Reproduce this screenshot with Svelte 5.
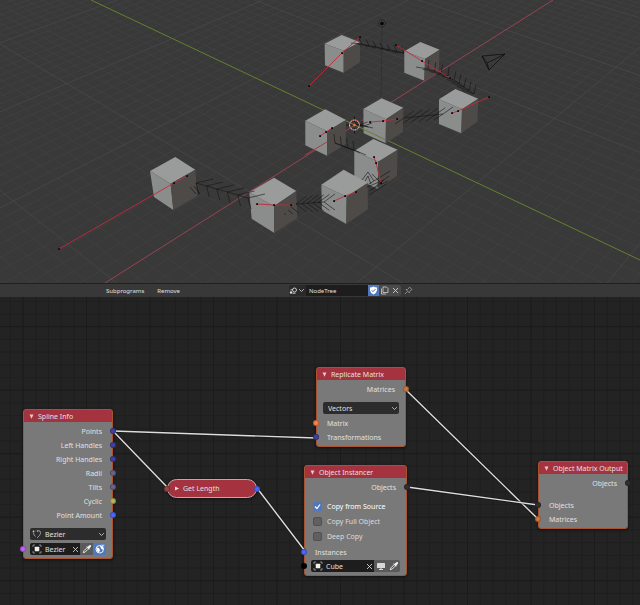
<script>
  let treeName = $state('NodeTree');
  let splineType = $state('Bezier');
  let splineObject = $state('Bezier');
  let matrixMode = $state('Vectors');
  let sourceObject = $state('Cube');

  let options = $state([
    { id: 'copy-source', label: 'Copy from Source', checked: true },
    { id: 'copy-full', label: 'Copy Full Object', checked: false },
    { id: 'deep-copy', label: 'Deep Copy', checked: false }
  ]);

  const splineOutputs = [
    { label: 'Points', type: 'vectors' },
    { label: 'Left Handles', type: 'vectors' },
    { label: 'Right Handles', type: 'vectors' },
    { label: 'Radii', type: 'floats' },
    { label: 'Tilts', type: 'floats' },
    { label: 'Cyclic', type: 'boolean' },
    { label: 'Point Amount', type: 'integer' }
  ];

  const wires = [
    [113, 134, 316, 141],
    [113, 134, 168, 191],
    [257, 191, 305, 254],
    [405, 92, 538, 222],
    [407, 190, 538, 208]
  ];

  // Floor grid: both line families run to a vanishing point
  const origin = [354.8, 125.2];
  const vpX = [1151, -378];
  const vpY = [-731, -390];

  const project = (u, v) => {
    const a = u * 0.0117;
    const b = v * -0.0101;
    const w = 1 + a + b;
    return [
      (origin[0] + a * vpX[0] + b * vpY[0]) / w,
      (origin[1] + a * vpX[1] + b * vpY[1]) / w
    ];
  };

  const floor = [];
  for (let i = -45; i <= 60; i++) {
    if (i === 0) continue;
    const major = i % 10 === 0;
    if (i <= 45) floor.push({ from: project(-38, i), to: project(70, i), major });
    floor.push({ from: project(i, -80), to: project(i, 28), major });
  }
  const lines = floor.filter((l) => [...l.from, ...l.to].every((n) => Math.abs(n) < 9000));

  // left, top, right, front, bottom right, bottom front, bottom left
  const cubes = [
    { at: [290, 0], p: [[104, 131], [155, 105], [210, 127], [161, 152], [210, 187], [161, 218], [105, 196]] },
    { at: [290, 0], p: [[343, 154], [391, 126], [449, 149], [405, 177], [446, 214], [403, 242], [343, 218]] },
    { at: [290, 0], p: [[447, 298], [496, 267], [565, 296], [516, 328], [562, 365], [514, 400], [447, 372]] },
    { at: [290, 90], p: [[220, 57], [275, 25], [340, 53], [288, 88], [339, 125], [287, 160], [221, 130]] },
    { at: [290, 90], p: [[46, 92], [106, 58], [168, 90], [112, 124], [167, 162], [111, 197], [46, 166]] },
    { at: [290, 90], p: [[193, 183], [250, 147], [323, 179], [265, 215], [321, 258], [263, 297], [193, 262]] },
    { at: [290, 90], p: [[94, 284], [161, 239], [233, 279], [170, 320], [234, 358], [169, 402], [96, 361]] },
    { at: [140, 140], p: [[328, 157], [402, 113], [469, 153], [402, 199], [472, 234], [403, 279], [335, 236]] },
    { at: [140, 140], p: [[30, 93], [106, 51], [166, 89], [92, 131], [172, 168], [100, 210], [42, 171]] }
  ];

  const face = (cube, ids) =>
    ids.map((i) => `${cube.at[0] + cube.p[i][0] / 3},${cube.at[1] + cube.p[i][1] / 3}`).join(' ');

  const handles = [
    [[309, 86], [342, 53], [360, 37]],
    [[396, 45], [422, 61], [450, 78]],
    [[452, 113], [458, 111], [489, 97]],
    [[370, 122], [383, 121], [397, 119]],
    [[320, 136], [326, 132], [332, 128]],
    [[374, 157], [376, 163], [381, 183]],
    [[334, 201], [345, 196], [356, 192]],
    [[257, 204], [274, 205], [291, 205]],
    [[59, 249], [174, 183], [187, 176]]
  ];

  // Curve normals: spine points with two barbs on each
  const chains = [
    { from: [196, 183], to: [248, 198], n: 5, up: [17, -4], down: [3, 11] },
    { from: [296, 204], to: [324, 202], n: 5, up: [11, -8], down: [11, 8] },
    { from: [335, 143], to: [354, 150], n: 3, up: [-1, -9], down: [12, 5] },
    { from: [355, 124], to: [364, 126], n: 2, up: [8, -3], down: [9, 2] },
    { from: [404, 118], to: [443, 114], n: 5, up: [10, -7], down: [-9, 6] },
    { from: [362, 44], to: [404, 53], n: 6, up: [-3, -6], down: [-11, -1] },
    { from: [428, 69], to: [448, 76], n: 3, up: [1, -9], down: [-12, -2] },
    { from: [454, 80], to: [474, 94], n: 4, up: [2, -9], down: [-12, -4] }
  ];

  const barbs = (c) => {
    let d = `M${c.from} L${c.to}`;
    for (let i = 0; i <= c.n; i++) {
      const x = c.from[0] + ((c.to[0] - c.from[0]) * i) / c.n;
      const y = c.from[1] + ((c.to[1] - c.from[1]) * i) / c.n;
      d += ` M${x + c.up[0]},${y + c.up[1]} L${x},${y} l${c.down[0]},${c.down[1]}`;
    }
    return d;
  };

  const gridStep = 12.7;
  const steps = Array.from({ length: 160 }, (_, i) => i);
</script>

{#snippet chevron()}
  <svg class="chevron" width="7" height="5" viewBox="0 0 7 5" aria-hidden="true">
    <path d="M1.200 1.200L3.500 3.500L5.800 1.200" fill="none" stroke="#c8c8c8" stroke-width="0.9" />
  </svg>
{/snippet}

{#snippet cubeIcon()}
  <svg width="10" height="10" viewBox="0 0 20 20" aria-hidden="true">
    <rect x="5.500" y="5.500" width="9" height="9" rx="1" fill="#f0f0f0" />
    <path d="M2 6V2H6M14 2H18V6M18 14V18H14M6 18H2V14" fill="none" stroke="#a8a8a8" stroke-width="1.500" />
  </svg>
{/snippet}

{#snippet cross()}
  <svg width="7" height="7" viewBox="0 0 7 7" aria-hidden="true">
    <path d="M1 1L6 6M6 1L1 6" fill="none" stroke="#d0d0d0" stroke-width="0.9" />
  </svg>
{/snippet}

{#snippet dropper()}
  <svg width="10" height="10" viewBox="0 0 20 20" aria-hidden="true">
    <path d="M11 6L14 3Q16.500 1 18 2.500Q19 4.500 17 6.500L14.500 9L15.500 10L14 11.500L8.500 6L10 4.500Z" fill="#f0f0f0" />
    <path d="M9.500 8L4 13.500L2.500 17.500L6.500 16L12 10.500" fill="none" stroke="#f0f0f0" stroke-width="1.800" />
  </svg>
{/snippet}

{#snippet title(text)}
  <header class="node-title">
    <svg width="5" height="5" viewBox="0 0 5 5" aria-hidden="true">
      <path d="M0.500 0.500H4.500L2.500 4.800Z" fill="#e6c9cc" />
    </svg>
    <h2>{text}</h2>
  </header>
{/snippet}

<main class="editor">
  <section class="viewport" aria-label="3D viewport">
    <svg class="scene" viewBox="0 0 640 283" preserveAspectRatio="xMidYMid slice">
      {#each lines as l}
        <line class="floor" class:major={l.major} x1={l.from[0]} y1={l.from[1]} x2={l.to[0]} y2={l.to[1]} />
      {/each}
      <path class="axis-y" d="M91 0L640 260" />
      <path class="axis-x" d="M105 283L553 0" />
      <path class="lamp-line" d="M382 27L381 98" />

      <!-- Cubes, far to near -->
      {#each cubes as cube}
        <polygon class="cube-top" points={face(cube, [0, 1, 2, 3])} />
        <polygon class="cube-left" points={face(cube, [0, 3, 5, 6])} />
        <polygon class="cube-right" points={face(cube, [3, 2, 4, 5])} />
      {/each}
      <path class="axis-y" d="M363 129L386 140" />
      <path class="axis-x" d="M305 155L327 142" />

      {#each chains as chain}
        <path class="barbs" d={barbs(chain)} />
      {/each}
      <!-- Tight bend in front of the middle cube, and ends that overlap cube faces -->
      <path
        class="barbs"
        d="M369 191L378 186L388 181M362 180L368 172L374 181M365 181L368 176L371 184M369 184L390 171M371 190L389 176M369 195L386 184M372 174L380 182M367 187L384 180M284 213L286 215M288 210L293 214M291 207L299 213M190 187L196 194M194 186L200 194"
      />

      {#each handles as h}
        <polyline class="handle" points={h.join(' ')} />
        {#each h as p}
          <rect x={p[0] - 0.8} y={p[1] - 0.8} width="1.800" height="1.800" fill="#0c0c0c" />
        {/each}
      {/each}

      <!-- Lamp and camera -->
      <circle cx="382" cy="23.500" r="1.800" fill="#050505" />
      <circle cx="382" cy="23.500" r="3.500" fill="none" stroke="#111" stroke-width="0.7" stroke-dasharray="1.500 1" />
      <path d="M482 56L505 54L489 70ZM482 56L487 63L505 54M487 63L489 70" fill="none" stroke="#0a0a0a" stroke-width="0.7" />

      <!-- 3D cursor -->
      <path d="M354.500 116.500V122M354.500 128V133.500M346 125H351.500M357.500 125H363" stroke="#111" stroke-width="0.8" />
      <circle cx="354.500" cy="125" r="5" fill="none" stroke="#d8d0d0" stroke-width="1" />
      <circle cx="354.500" cy="125" r="5" fill="none" stroke="#c8323c" stroke-width="1" stroke-dasharray="2 2" />
      <circle cx="354.500" cy="125" r="1.200" fill="#f08a1c" />
    </svg>
  </section>

  <nav class="toolbar" aria-label="Node editor">
    <button class="menu">Subprograms</button>
    <button class="menu">Remove</button>
    <div class="tree-picker">
      <button class="browse" aria-label="Browse node trees">
        <svg width="9" height="8" viewBox="0 0 18 16" aria-hidden="true">
          <circle cx="11" cy="6" r="4" fill="none" stroke="#d8d8d8" stroke-width="1.800" />
          <circle cx="4" cy="11" r="2.500" fill="#d8d8d8" />
          <path d="M7 12.500H13M3 6L7 5" stroke="#d8d8d8" stroke-width="1.800" />
        </svg>
        {@render chevron()}
      </button>
      <input class="tree-name" aria-label="Node tree name" bind:value={treeName} />
      <button class="tool active" aria-label="Fake user">
        <svg width="9" height="9" viewBox="0 0 18 18" aria-hidden="true">
          <path d="M9 1Q12 3 16 3V9Q15 14 9 17Q3 14 2 9V3Q6 3 9 1Z" fill="#fff" />
          <path d="M5.500 8.500L8 11.500L13 6" fill="none" stroke="#4f78bf" stroke-width="2" />
        </svg>
      </button>
      <button class="tool" aria-label="Duplicate">
        <svg width="9" height="9" viewBox="0 0 18 18" aria-hidden="true">
          <path d="M6 2H13L16 5V13H6ZM3 5V16H12" fill="none" stroke="#d0d0d0" stroke-width="1.600" />
        </svg>
      </button>
      <button class="tool" aria-label="Unlink">{@render cross()}</button>
    </div>
    <button class="pin" aria-label="Pin">
      <svg width="9" height="9" viewBox="0 0 18 18" aria-hidden="true">
        <path d="M11 2L16 7L14 8L11 11V14L4 7H7L10 4ZM7 11L2 16" fill="none" stroke="#999" stroke-width="1.600" />
      </svg>
    </button>
  </nav>

  <section class="canvas" aria-label="Node canvas">
    <svg class="backdrop" aria-hidden="true">
      {#each steps as i}
        <line class="grid" class:major={i % 5 === 2} x1={10.3 + (i - 1) * gridStep} x2={10.3 + (i - 1) * gridStep} y1="0" y2="100%" />
        <line class="grid" class:major={i % 5 === 2} y1={4.3 + i * gridStep} y2={4.3 + i * gridStep} x1="0" x2="100%" />
      {/each}
    </svg>

    <article class="node spline-info">
      {@render title('Spline Info')}
      <div class="node-body">
        {#each splineOutputs as output}
          <div class="row output">{output.label}<i class="socket {output.type}"></i></div>
        {/each}
        <div class="select-wrapper with-icon">
          <svg class="select-icon" width="10" height="10" viewBox="0 0 20 20" aria-hidden="true">
            <path d="M7 4H8M12 3Q18 3 17 9Q16 13 10 18M3 8Q3 12 7 15" fill="none" stroke="#b8b8b8" stroke-width="1.500" />
            <circle cx="3" cy="5" r="1.800" fill="#c8c8c8" />
            <circle cx="11" cy="4" r="1.500" fill="#c8c8c8" />
          </svg>
          <select aria-label="Spline type" bind:value={splineType}>
            <option>Bezier</option>
            <option>Poly</option>
          </select>
          {@render chevron()}
        </div>
        <div class="row field-row">
          <i class="socket spline"></i>
          <div class="field">
            {@render cubeIcon()}
            <input aria-label="Spline object" bind:value={splineObject} />
            <button class="clear" aria-label="Clear object">{@render cross()}</button>
          </div>
          <button class="side" aria-label="Pick object">{@render dropper()}</button>
          <button class="side active" aria-label="World space">
            <svg width="10" height="10" viewBox="0 0 20 20" aria-hidden="true">
              <circle cx="9.500" cy="10.500" r="7.500" fill="none" stroke="#fff" stroke-width="1.800" />
              <path d="M3 7L8 8L10 12L8 17L4 14ZM10 3L16 6L17 12L13 10L11 7Z" fill="#fff" />
              <path d="M14 1L18 5M18 1L14 5" stroke="#fff" stroke-width="1.500" />
            </svg>
          </button>
        </div>
      </div>
    </article>

    <article class="node replicate">
      {@render title('Replicate Matrix')}
      <div class="node-body">
        <div class="row output">Matrices<i class="socket matrices"></i></div>
        <div class="select-wrapper">
          <select aria-label="Transformation type" bind:value={matrixMode}>
            <option>Vectors</option>
            <option>Matrices</option>
          </select>
          {@render chevron()}
        </div>
        <div class="row input"><i class="socket matrix"></i>Matrix</div>
        <div class="row input"><i class="socket vectors"></i>Transformations</div>
      </div>
    </article>

    <article class="node get-length">
      <i class="socket generic"></i>
      <svg width="4" height="5" viewBox="0 0 4 5" aria-hidden="true">
        <path d="M0 0.500L4 2.500L0 4.500Z" fill="#f0d8da" />
      </svg>
      <h2>Get Length</h2>
      <i class="socket integer"></i>
    </article>

    <article class="node instancer">
      {@render title('Object Instancer')}
      <div class="node-body">
        <div class="row output">Objects<i class="socket objects"></i></div>
        <div class="options">
          {#each options as option (option.id)}
            <label for={option.id} class:on={option.checked}>
              <span class="check">
                <input id={option.id} type="checkbox" bind:checked={option.checked} />
                {#if option.checked}
                  <svg width="7" height="7" viewBox="0 0 7 7" aria-hidden="true">
                    <path d="M1 3.500L3 5.500L6 1.500" fill="none" stroke="#fff" stroke-width="1.200" />
                  </svg>
                {/if}
              </span>
              {option.label}
            </label>
          {/each}
        </div>
        <div class="row input"><i class="socket integer"></i>Instances</div>
        <div class="row field-row">
          <i class="socket object"></i>
          <div class="field">
            {@render cubeIcon()}
            <input aria-label="Source object" bind:value={sourceObject} />
            <button class="clear" aria-label="Clear object">{@render cross()}</button>
          </div>
          <button class="side" aria-label="Use active object">
            <svg width="10" height="10" viewBox="0 0 20 20" aria-hidden="true">
              <rect x="2" y="4" width="16" height="10" rx="1" fill="#d8d8d8" />
              <path d="M6 17H14M10 13V17" stroke="#d8d8d8" stroke-width="2" />
            </svg>
          </button>
          <button class="side" aria-label="Pick object">{@render dropper()}</button>
        </div>
      </div>
    </article>

    <article class="node matrix-output">
      {@render title('Object Matrix Output')}
      <div class="node-body">
        <div class="row output">Objects<i class="socket objects"></i></div>
        <div class="row input first"><i class="socket objects"></i>Objects</div>
        <div class="row input"><i class="socket matrices"></i>Matrices</div>
      </div>
    </article>

    <svg class="backdrop wires" aria-hidden="true">
      {#each wires as [x1, y1, x2, y2]}
        <line class="wire-edge" {x1} {y1} {x2} {y2} />
        <line class="wire" {x1} {y1} {x2} {y2} />
      {/each}
    </svg>
  </section>
</main>

<style>
  :global(body) {
    margin: 0;
    background: #232323;
  }

  .editor {
    display: flex;
    flex-direction: column;
    min-height: 100vh;
    font-family: 'Noto Sans', 'DejaVu Sans', sans-serif;
    font-size: 7px;
    color: #e0e0e0;
  }

  svg {
    display: block;
    flex: none;
  }

  button {
    display: flex;
    align-items: center;
    justify-content: center;
    padding: 0;
    border: 0;
    background: none;
    color: inherit;
    font: inherit;
  }

  input,
  select {
    box-sizing: border-box;
    min-width: 0;
    margin: 0;
    padding: 0;
    border: 0;
    outline: none;
    background: none;
    color: inherit;
    font: inherit;
    appearance: none;
  }

  h2 {
    margin: 0;
    font-size: 7px;
    font-weight: 400;
    white-space: nowrap;
  }

  /* 3D viewport */
  .viewport {
    background: #393939;
  }

  .scene {
    width: 100%;
    height: auto;
  }

  .floor {
    stroke: #424242;
    stroke-width: 0.7;
  }

  .floor.major {
    stroke: #4b4b4b;
  }

  .axis-x,
  .axis-y {
    fill: none;
    stroke: #984350;
    stroke-width: 1;
  }

  .axis-y {
    stroke: #64802f;
  }

  .lamp-line {
    stroke: #2c2c2c;
    stroke-width: 0.6;
  }

  .cube-top {
    fill: #9a9c9c;
  }

  .cube-left {
    fill: #8b8d8c;
  }

  .cube-right {
    fill: #4d4a48;
  }

  .barbs {
    fill: none;
    stroke: #141414;
    stroke-width: 0.6;
  }

  .handle {
    fill: none;
    stroke: #c22a3a;
    stroke-width: 0.9;
  }

  /* Toolbar */
  .toolbar {
    display: flex;
    align-items: center;
    height: 13px;
    padding-left: 106px;
    border-top: 1px solid #202020;
    background: #383838;
    font-size: 6px;
  }

  .menu {
    margin-right: 13px;
  }

  .tree-picker {
    display: flex;
    height: 11px;
    margin-left: 96px;
    border-radius: 2px;
    background: #2a2a2a;
    overflow: hidden;
  }

  .browse {
    width: 17px;
  }

  .tree-name {
    width: 62px;
    padding-left: 3px;
    background: #1d1d1d;
  }

  .tool {
    width: 11px;
    background: #4a4a4a;
  }

  .active {
    background: #4f78bf;
  }

  .pin {
    margin-left: 3px;
  }

  /* Node canvas */
  .canvas {
    position: relative;
    flex: 1;
    min-height: 308px;
    background: #232323;
    overflow: hidden;
  }

  .backdrop {
    position: absolute;
    width: 100%;
    height: 100%;
  }

  .wires {
    pointer-events: none;
  }

  .grid {
    stroke: #1f1f1f;
  }

  .grid.major {
    stroke: #1b1b1b;
  }

  .wire-edge {
    stroke: #111;
    stroke-opacity: 0.5;
    stroke-width: 3;
  }

  .wire {
    stroke: #dedede;
    stroke-width: 1.4;
  }

  .node {
    position: absolute;
    box-sizing: border-box;
    width: 90px;
    border: 1px solid #a8532f;
    border-radius: 3px;
    background: #797979;
    box-shadow: 0 1px 3px #111;
  }

  .spline-info {
    left: 23px;
    top: 112px;
  }

  .replicate {
    left: 316px;
    top: 70px;
  }

  .instancer {
    left: 304px;
    top: 168px;
    width: 103px;
  }

  .matrix-output {
    left: 538px;
    top: 164px;
  }

  .get-length {
    left: 167px;
    top: 182px;
    display: flex;
    align-items: center;
    gap: 4px;
    height: 19px;
    padding-left: 7px;
    border-color: #c8a4a8;
    border-radius: 10px;
    background: #a5323f;
  }

  .node-title {
    display: flex;
    align-items: center;
    gap: 4px;
    height: 12px;
    padding-left: 5px;
    border-radius: 2px 2px 0 0;
    background: #a5323f;
  }

  .node-body {
    padding: 2px 6px;
  }

  .row {
    position: relative;
    display: flex;
    align-items: center;
    height: 14px;
    margin: 0 -6px;
    padding: 0 10px;
  }

  .output {
    justify-content: flex-end;
  }

  .first {
    margin-top: 8px;
  }

  /* Dots stay above the wires that end on them */
  .socket {
    position: absolute;
    z-index: 1;
    top: 50%;
    left: -4px;
    box-sizing: border-box;
    width: 6px;
    height: 6px;
    margin-top: -3px;
    border: 1px solid rgba(0, 0, 0, 0.25);
    border-radius: 50%;
  }

  .output .socket,
  .get-length .socket:last-child {
    left: auto;
    right: -4px;
  }

  .vectors {
    background-color: #4040a4;
  }

  .floats {
    background-color: #68648c;
  }

  .boolean {
    background-color: #b8b45c;
  }

  .integer {
    background-color: #4a68ff;
  }

  .spline {
    background-color: #c860f8;
  }

  .matrix {
    background-color: #ff8040;
  }

  .matrices {
    background-color: #d0763e;
  }

  .generic {
    background-color: #9c4545;
  }

  .objects {
    background-color: #303030;
  }

  .object {
    background-color: #000;
  }

  .select-wrapper {
    position: relative;
    height: 12px;
    margin: 6px 0 2px;
    border-radius: 2px;
    background: #2c2c2c;
  }

  .select-wrapper select {
    display: block;
    width: 100%;
    height: 12px;
    padding-left: 5px;
  }

  .with-icon select {
    padding-left: 15px;
  }

  .select-wrapper .chevron {
    position: absolute;
    right: 1px;
    top: 4px;
    pointer-events: none;
  }

  .select-icon {
    position: absolute;
    left: 2px;
    top: 1px;
  }

  .field-row {
    padding: 0 6px;
  }

  .field {
    display: flex;
    flex: 1;
    align-items: center;
    gap: 3px;
    min-width: 0;
    height: 12px;
    padding-left: 2px;
    border-radius: 2px 0 0 2px;
    background: #1d1d1d;
  }

  .field input {
    flex: 1;
    width: 0;
  }

  .clear {
    width: 9px;
  }

  .side {
    width: 13px;
    height: 12px;
    background: #5a5a5a;
  }

  .side:last-child {
    border-radius: 0 2px 2px 0;
  }

  .side.active {
    background: #4f78bf;
  }

  .options {
    display: flex;
    flex-direction: column;
    gap: 3px;
    margin: 6px 2px 3px;
  }

  .options label {
    display: flex;
    align-items: center;
    gap: 5px;
    height: 12px;
    color: #dcdcdc;
  }

  .options label.on {
    color: #fff;
  }

  .check {
    display: grid;
    place-items: center;
    width: 9px;
    height: 9px;
  }

  .check input,
  .check svg {
    grid-area: 1 / 1;
  }

  .check svg {
    pointer-events: none;
    z-index: 1;
  }

  .check input {
    width: 9px;
    height: 9px;
    border: 1px solid #505050;
    border-radius: 2px;
    background: #606060;
  }

  .check input:checked {
    border-color: #4f78bf;
    background: #4f78bf;
  }
</style>
